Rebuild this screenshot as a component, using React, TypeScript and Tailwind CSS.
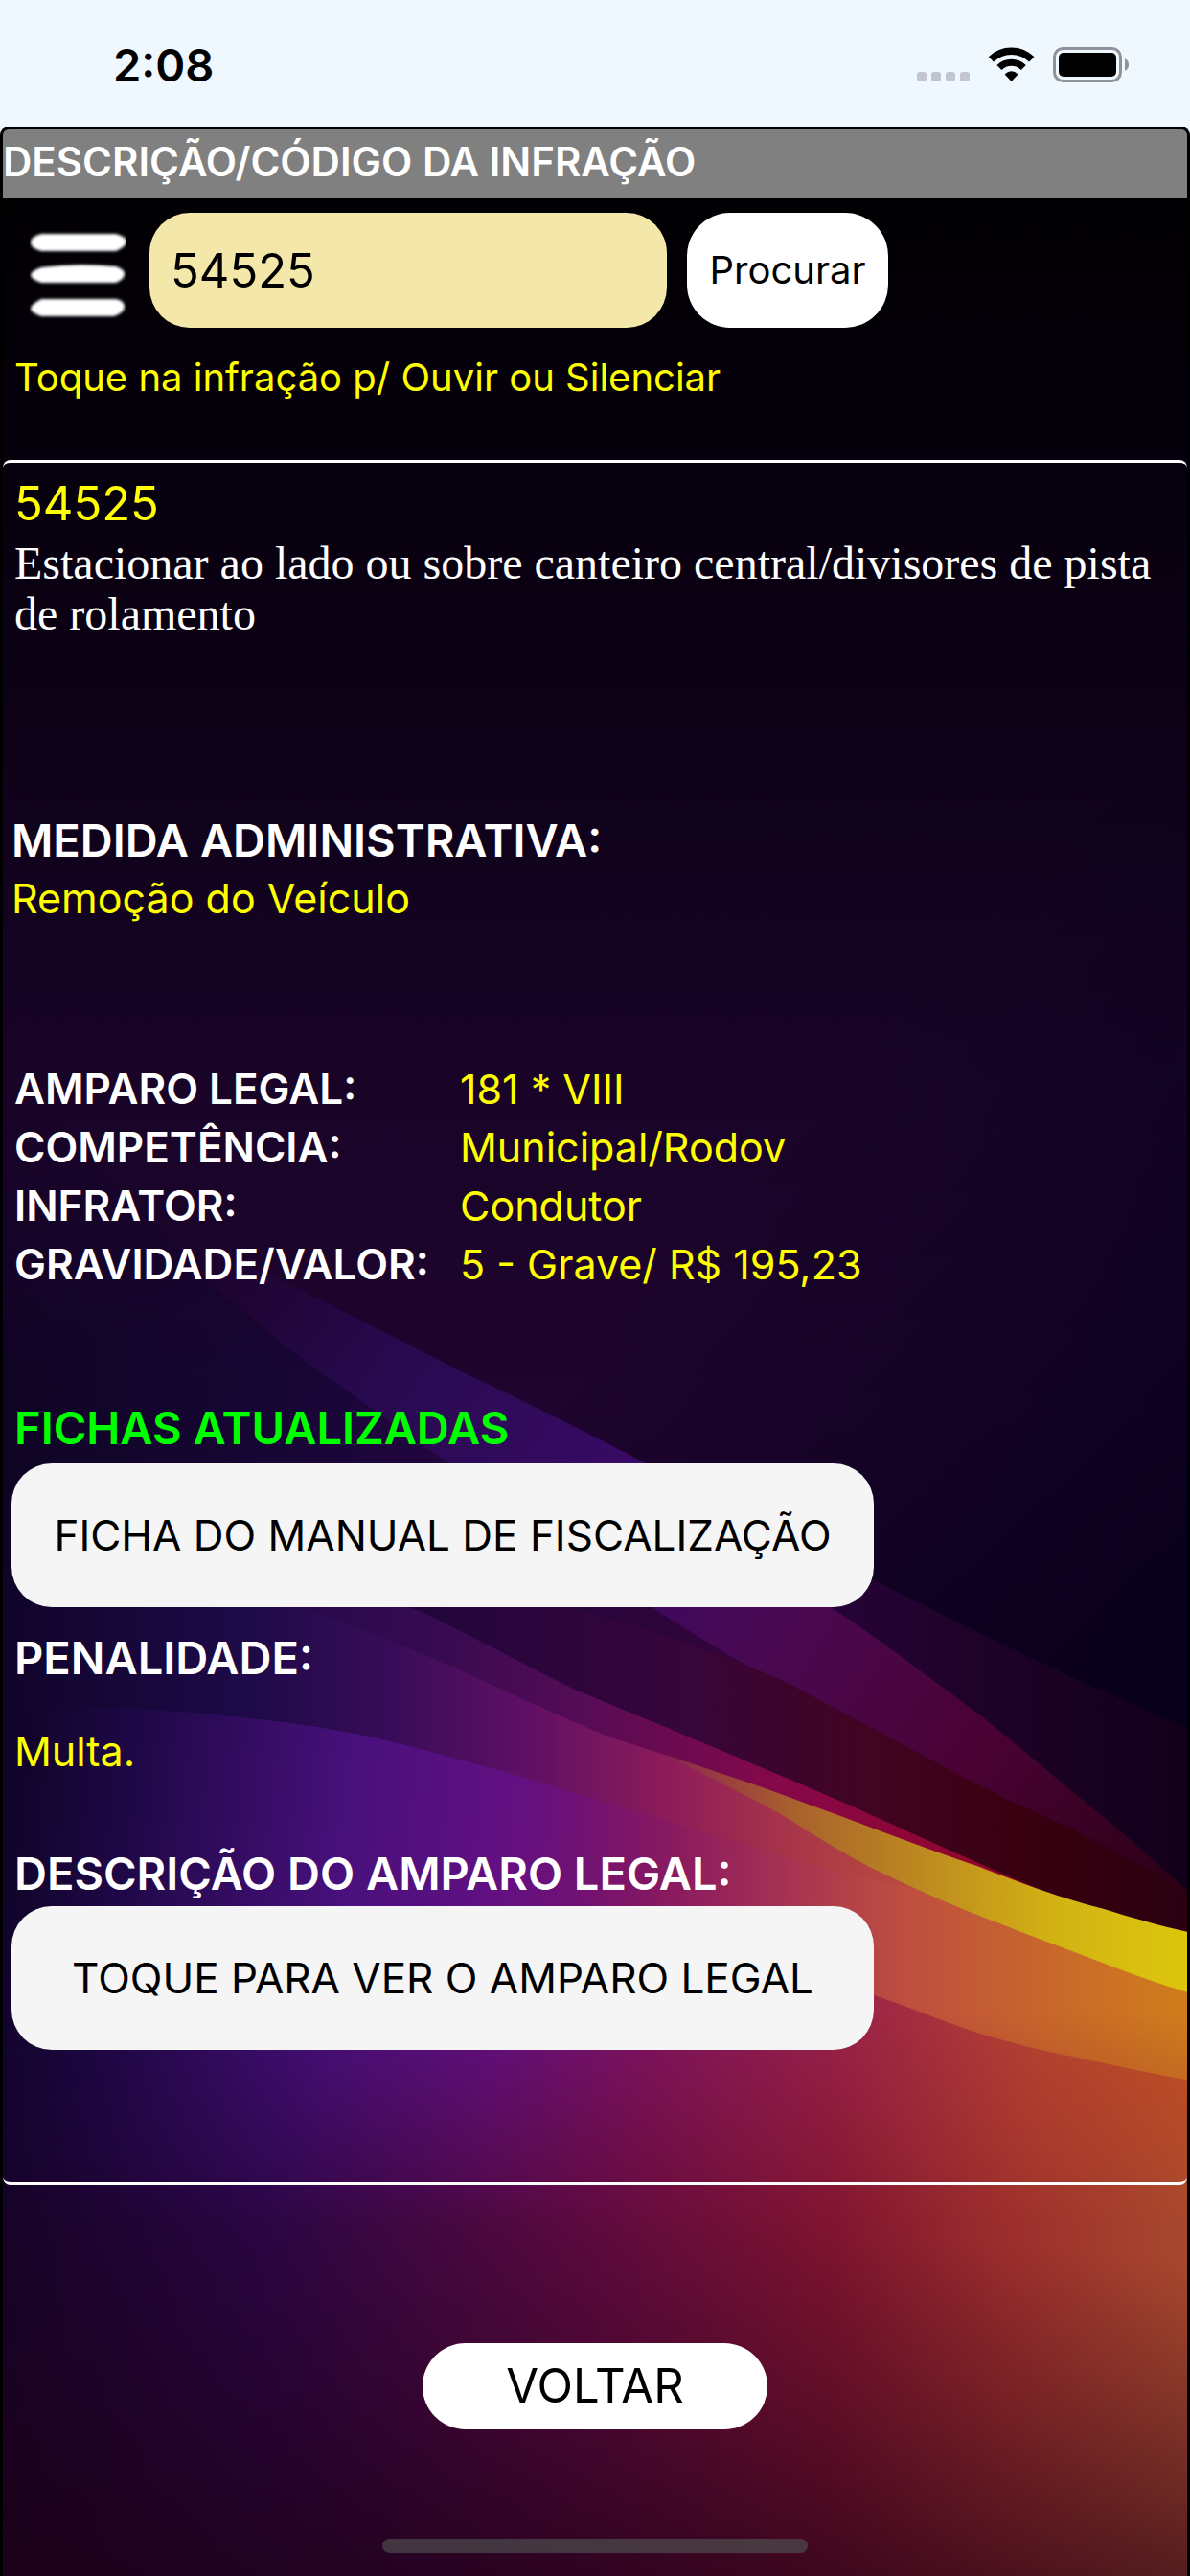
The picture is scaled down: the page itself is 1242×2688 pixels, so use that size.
import { useState } from 'react';

const details = [
  { label: 'AMPARO LEGAL:', value: '181 * VIII' },
  { label: 'COMPETÊNCIA:', value: 'Municipal/Rodov' },
  { label: 'INFRATOR:', value: 'Condutor' },
  { label: 'GRAVIDADE/VALOR:', value: '5 - Grave/ R$ 195,23' },
];

function StatusBar() {
  return (
    <div className="flex h-[132px] items-start justify-between bg-[#f0f8ff] pt-[38px] pr-16 pl-[118px]">
      <span className="text-[47px] leading-[60px] font-semibold text-black">2:08</span>
      <svg width="221" height="37" viewBox="0 0 221 37" className="mt-[11px]" aria-hidden="true">
        <g fill="#c2c5cf">
          <rect x="0" y="26" width="10" height="10" rx="3" />
          <rect x="15" y="26" width="10" height="10" rx="3" />
          <rect x="30" y="26" width="10" height="10" rx="3" />
          <rect x="45" y="26" width="10" height="10" rx="3" />
        </g>
        <g fill="none" stroke="#000">
          <path d="M77.4 12.9A30 30 0 0 1 119.8 12.9" strokeWidth="7.5" />
          <path d="M85.9 21.6A18 18 0 0 1 111.3 21.6" strokeWidth="7" />
        </g>
        <path d="M98.6 36L91.6 28.6Q98.6 22 105.6 28.6Z" />
        <rect x="143.500" y="1.500" width="69" height="34" rx="9" fill="none" stroke="#8f9399" strokeWidth="3" />
        <rect x="148" y="6" width="60" height="25" rx="5" />
        <path d="M217 12Q221 14 221 18.500T217 25Z" fill="#8f9399" />
      </svg>
    </div>
  );
}

/* Abstract wave wallpaper behind the whole screen */
function Wallpaper() {
  return (
    <svg
      className="absolute inset-0 h-full w-full"
      viewBox="0 132 1242 2556"
      preserveAspectRatio="none"
      aria-hidden="true"
    >
      <defs>
        <linearGradient id="sky" x1="0" y1="132" x2="0" y2="1800" gradientUnits="userSpaceOnUse">
          <stop offset="0" stopColor="#000000" />
          <stop offset="0.2" stopColor="#06000c" />
          <stop offset="0.42" stopColor="#0f021a" />
          <stop offset="0.6" stopColor="#190428" />
          <stop offset="0.8" stopColor="#1e042e" />
          <stop offset="1" stopColor="#1a0228" />
        </linearGradient>
        <linearGradient id="skyRight" x1="760" y1="1250" x2="1242" y2="1680" gradientUnits="userSpaceOnUse">
          <stop offset="0" stopColor="#07001a" stopOpacity="0" />
          <stop offset="1" stopColor="#07001a" stopOpacity="0.9" />
        </linearGradient>
        <linearGradient id="left" x1="0" y1="0" x2="800" y2="0" gradientUnits="userSpaceOnUse">
          <stop offset="0" stopColor="#0f0424" />
          <stop offset="0.35" stopColor="#160634" />
          <stop offset="0.6" stopColor="#230640" />
          <stop offset="1" stopColor="#320438" />
        </linearGradient>
        <linearGradient id="leftFade" x1="0" y1="1150" x2="0" y2="1450" gradientUnits="userSpaceOnUse">
          <stop offset="0" stopColor="#fff" stopOpacity="0" />
          <stop offset="1" stopColor="#fff" />
        </linearGradient>
        <mask id="leftMask" maskUnits="userSpaceOnUse" x="0" y="132" width="1242" height="2556">
          <rect x="0" y="132" width="1242" height="2556" fill="url(#leftFade)" />
        </mask>
        <linearGradient id="beam" x1="200" y1="1290" x2="1239" y2="1990" gradientUnits="userSpaceOnUse">
          <stop offset="0" stopColor="#240646" stopOpacity="0" />
          <stop offset="0.2" stopColor="#280a50" />
          <stop offset="0.42" stopColor="#390a66" />
          <stop offset="0.6" stopColor="#4a0850" />
          <stop offset="0.78" stopColor="#4a0234" />
          <stop offset="1" stopColor="#2a0014" />
        </linearGradient>
        <linearGradient id="veil" x1="800" y1="0" x2="1239" y2="0" gradientUnits="userSpaceOnUse">
          <stop offset="0" stopColor="#2a0440" />
          <stop offset="0.5" stopColor="#1e0228" />
          <stop offset="1" stopColor="#12001a" />
        </linearGradient>
        <linearGradient id="wine" x1="430" y1="0" x2="1239" y2="0" gradientUnits="userSpaceOnUse">
          <stop offset="0" stopColor="#22063e" />
          <stop offset="0.35" stopColor="#36053a" />
          <stop offset="0.6" stopColor="#420420" />
          <stop offset="0.8" stopColor="#380010" />
          <stop offset="1" stopColor="#2a0010" />
        </linearGradient>
        <linearGradient id="pink" x1="200" y1="0" x2="1020" y2="0" gradientUnits="userSpaceOnUse">
          <stop offset="0" stopColor="#1c0846" />
          <stop offset="0.3" stopColor="#360a50" />
          <stop offset="0.5" stopColor="#560c56" />
          <stop offset="0.75" stopColor="#86084a" />
          <stop offset="1" stopColor="#90062c" />
        </linearGradient>
        <linearGradient id="rose" x1="0" y1="0" x2="1000" y2="0" gradientUnits="userSpaceOnUse">
          <stop offset="0" stopColor="#10042a" />
          <stop offset="0.25" stopColor="#1d0a48" />
          <stop offset="0.4" stopColor="#360c58" />
          <stop offset="0.55" stopColor="#600f66" />
          <stop offset="0.7" stopColor="#8e1c5a" />
          <stop offset="0.85" stopColor="#ac3a46" />
          <stop offset="1" stopColor="#be5438" />
        </linearGradient>
        <linearGradient id="gold" x1="690" y1="0" x2="1239" y2="0" gradientUnits="userSpaceOnUse">
          <stop offset="0" stopColor="#8e3a3c" stopOpacity="0.3" />
          <stop offset="0.25" stopColor="#a8602c" />
          <stop offset="0.5" stopColor="#bd8a20" />
          <stop offset="0.75" stopColor="#d2b214" />
          <stop offset="1" stopColor="#dcc60c" />
        </linearGradient>
        <linearGradient id="orange" x1="600" y1="0" x2="1239" y2="0" gradientUnits="userSpaceOnUse">
          <stop offset="0" stopColor="#80146a" stopOpacity="0" />
          <stop offset="0.3" stopColor="#a02c56" />
          <stop offset="0.54" stopColor="#be4e40" />
          <stop offset="0.78" stopColor="#c8682a" />
          <stop offset="1" stopColor="#d07c1c" />
        </linearGradient>
        <linearGradient id="body" x1="0" y1="2000" x2="1242" y2="2130" gradientUnits="userSpaceOnUse">
          <stop offset="0" stopColor="#10042a" />
          <stop offset="0.1" stopColor="#200848" />
          <stop offset="0.28" stopColor="#48107c" />
          <stop offset="0.42" stopColor="#641082" />
          <stop offset="0.56" stopColor="#82145e" />
          <stop offset="0.72" stopColor="#9c2448" />
          <stop offset="0.88" stopColor="#b84430" />
          <stop offset="1" stopColor="#c24e22" />
        </linearGradient>
        <linearGradient id="ember" x1="0" y1="0" x2="1242" y2="0" gradientUnits="userSpaceOnUse">
          <stop offset="0" stopColor="#16032a" />
          <stop offset="0.22" stopColor="#2c0648" />
          <stop offset="0.5" stopColor="#600a40" />
          <stop offset="0.7" stopColor="#801430" />
          <stop offset="0.85" stopColor="#9c2e2c" />
          <stop offset="1" stopColor="#a8482e" />
        </linearGradient>
        <linearGradient id="emberFade" x1="0" y1="2100" x2="0" y2="2320" gradientUnits="userSpaceOnUse">
          <stop offset="0" stopColor="#fff" stopOpacity="0" />
          <stop offset="1" stopColor="#fff" />
        </linearGradient>
        <mask id="emberMask" maskUnits="userSpaceOnUse" x="0" y="132" width="1242" height="2556">
          <rect x="0" y="132" width="1242" height="2556" fill="url(#emberFade)" />
        </mask>
        <linearGradient id="night" x1="200" y1="2260" x2="160" y2="2688" gradientUnits="userSpaceOnUse">
          <stop offset="0" stopColor="#1c0014" stopOpacity="0" />
          <stop offset="0.5" stopColor="#1c0014" stopOpacity="0.38" />
          <stop offset="1" stopColor="#1c0014" stopOpacity="0.78" />
        </linearGradient>
      </defs>

      <rect x="0" y="132" width="1242" height="2556" fill="url(#sky)" />
      <rect x="0" y="132" width="1242" height="2556" fill="url(#skyRight)" />
      <path
        d="M0 1120C120 1230 170 1290 230 1350C270 1385 310 1413 348 1441C390 1470 430 1500 467 1525C600 1610 720 1690 821 1754L900 2100H0Z"
        fill="url(#left)"
        mask="url(#leftMask)"
      />
      <path d="M800 1590C940 1660 1090 1740 1242 1802V2000L860 1670Z" fill="url(#veil)" />
      <path
        d="M150 1260C200 1285 250 1312 301 1339C360 1369 420 1398 475 1427C545 1460 610 1492 673 1525C745 1570 810 1625 871 1678C921 1710 965 1745 1008 1776C1048 1806 1085 1838 1121 1868C1165 1903 1205 1938 1242 1972V2010L1054 1890C960 1840 900 1800 821 1760C720 1705 560 1600 467 1525C430 1500 390 1470 348 1441C290 1400 220 1345 150 1260Z"
        fill="url(#beam)"
      />
      <path
        d="M380 1640C560 1660 700 1700 821 1754C900 1795 980 1840 1054 1877C1120 1905 1190 1940 1242 1975V2060L821 1900Z"
        fill="url(#wine)"
      />
      <path
        d="M200 1640C300 1640 360 1655 438 1680C500 1710 550 1738 600 1762C680 1795 760 1828 821 1854C921 1896 980 1925 1080 1968L1000 2000L600 1850L200 1750Z"
        fill="url(#pink)"
      />
      <path
        d="M0 1640C120 1640 220 1650 318 1678C380 1700 430 1720 480 1742C530 1765 580 1788 635 1811C700 1832 760 1852 821 1873L1020 1955V2050H0Z"
        fill="url(#rose)"
      />
      <path
        d="M60 1783C120 1780 180 1783 240 1790C300 1796 340 1802 384 1811C440 1823 480 1836 527 1848C570 1861 610 1873 647 1884C720 1906 780 1926 839 1942C900 1960 960 1978 1021 1997V2300H0V1783Z"
        fill="url(#body)"
      />
      <path
        d="M600 1870C615 1874 631 1879 647 1884C720 1906 780 1926 839 1942C900 1958 960 1972 1021 1980C1121 2015 1180 2040 1242 2050V2300H600Z"
        fill="url(#orange)"
      />
      <path
        d="M500 1990C700 2010 820 2055 916 2082C960 2097 990 2110 1021 2120C1060 2132 1090 2139 1121 2145C1160 2153 1200 2162 1242 2170V2688H0V1990Z"
        fill="url(#body)"
      />
      <path
        d="M690 1828C740 1845 780 1858 821 1873C890 1898 960 1925 1021 1946C1070 1965 1110 1980 1154 1991C1180 1999 1210 2008 1242 2015V2078C1200 2066 1160 2050 1121 2035C1090 2024 1055 2010 1021 1997C985 1983 950 1967 921 1953C890 1938 850 1914 821 1895C780 1872 730 1848 690 1828Z"
        fill="url(#gold)"
      />
      <rect x="0" y="2080" width="1242" height="608" fill="url(#ember)" mask="url(#emberMask)" />
      <rect x="0" y="2240" width="1242" height="448" fill="url(#night)" />
    </svg>
  );
}

export default function App() {
  const [code, setCode] = useState('54525');

  return (
    <div className="flex min-h-screen flex-col bg-[#f0f8ff] font-['Inter',sans-serif]">
      <StatusBar />

      <div className="relative isolate flex flex-1 flex-col overflow-hidden rounded-t-[9px] border-x-[3px] border-t-[3px] border-black bg-black text-white">
        <div className="absolute inset-0 -z-10">
          <Wallpaper />
        </div>

        <header className="bg-[#808080] pb-1">
          <h1 className="text-[42px] leading-[68px] font-semibold">DESCRIÇÃO/CÓDIGO DA INFRAÇÃO</h1>
        </header>

        <form className="flex items-center pt-[15px] pl-6" onSubmit={(e) => e.preventDefault()}>
          <button type="button" aria-label="Menu" className="mr-5 p-1">
            <svg width="101" height="104" viewBox="0 -11 101 104" aria-hidden="true">
              <defs>
                <filter id="soft" x="-10%" y="-30%" width="120%" height="160%">
                  <feGaussianBlur stdDeviation="1.8" />
                </filter>
              </defs>
              <g fill="#fff" filter="url(#soft)">
                <path d="M12 3H90Q101 6 101 11T90 21H12Q1 18 1 12T12 3Z" />
                <path d="M12 38Q50 33 90 37Q99 40 99 45T90 54H12Q1 50 1 46T12 38Z" />
                <path d="M12 71H90Q99 73 99 79T88 89H12Q1 85 1 81T12 71Z" />
              </g>
            </svg>
          </button>
          <input
            type="text"
            aria-label="Código da infração"
            value={code}
            onChange={(e) => setCode(e.target.value)}
            className="mr-[21px] h-[120px] w-[540px] rounded-[42px] bg-[#f3e7a9] px-[22px] text-[49px] text-black outline-none"
          />
          <button type="submit" className="h-[120px] w-[210px] rounded-[45px] bg-white text-[40px] text-black">
            Procurar
          </button>
        </form>

        <p className="mt-[22px] mb-14 pl-3 text-[40px] leading-[60px] text-[#ffff00]">
          Toque na infração p/ Ouvir ou Silenciar
        </p>

        <main className="rounded-lg border-y-[3px] border-white pt-[13px] pb-[138px]">
          <div className="px-3">
            <h2 className="text-[49px] leading-[60px] text-[#ffff00]">54525</h2>
            <p className="mt-[5px] font-['Liberation_Serif',serif] text-[48px] leading-[53px]">
              Estacionar ao lado ou sobre canteiro central/divisores de pista de rolamento
            </p>
          </div>

          <section className="mt-[180px] pl-[9px]">
            <h3 className="text-[47px] leading-[60px] font-semibold">MEDIDA ADMINISTRATIVA:</h3>
            <p className="text-[43px] leading-[60px] text-[#ffff00]">Remoção do Veículo</p>
          </section>

          <dl className="mt-[139px] grid grid-cols-[465px_1fr] pl-3 leading-[61px]">
            {details.map((item) => (
              <div key={item.label} className="contents">
                <dt className="text-[44px] font-semibold">{item.label}</dt>
                <dd className="text-[43px] text-[#ffff00]">{item.value}</dd>
              </div>
            ))}
          </dl>

          <section className="mt-[110px]">
            <h3 className="pl-3 text-[47px] leading-[60px] font-semibold text-[#00ff00]">FICHAS ATUALIZADAS</h3>
            <button className="mt-[7px] ml-[9px] block h-[150px] w-[900px] rounded-[42px] bg-[#f5f5f5] text-[44px] text-black">
              FICHA DO MANUAL DE FISCALIZAÇÃO
            </button>
          </section>

          <section className="mt-[23px] pl-3">
            <h3 className="text-[47px] leading-[60px] font-semibold">PENALIDADE:</h3>
            <p className="mt-[37px] text-[43px] leading-[60px] text-[#ffff00]">Multa.</p>
          </section>

          <section className="mt-[68px]">
            <h3 className="pl-3 text-[47px] leading-[60px] font-semibold">DESCRIÇÃO DO AMPARO LEGAL:</h3>
            <button className="mt-1 ml-[9px] block h-[150px] w-[900px] rounded-[42px] bg-[#f5f5f5] text-[44px] text-black">
              TOQUE PARA VER O AMPARO LEGAL
            </button>
          </section>
        </main>

        <footer className="flex flex-col items-center pt-[165px] pb-6">
          <button className="h-[90px] w-[360px] rounded-full bg-white text-[49px] text-black">VOLTAR</button>
          <div className="mt-[114px] h-[15px] w-[444px] rounded-full bg-[#4d4d4d]/70" />
        </footer>
      </div>
    </div>
  );
}
